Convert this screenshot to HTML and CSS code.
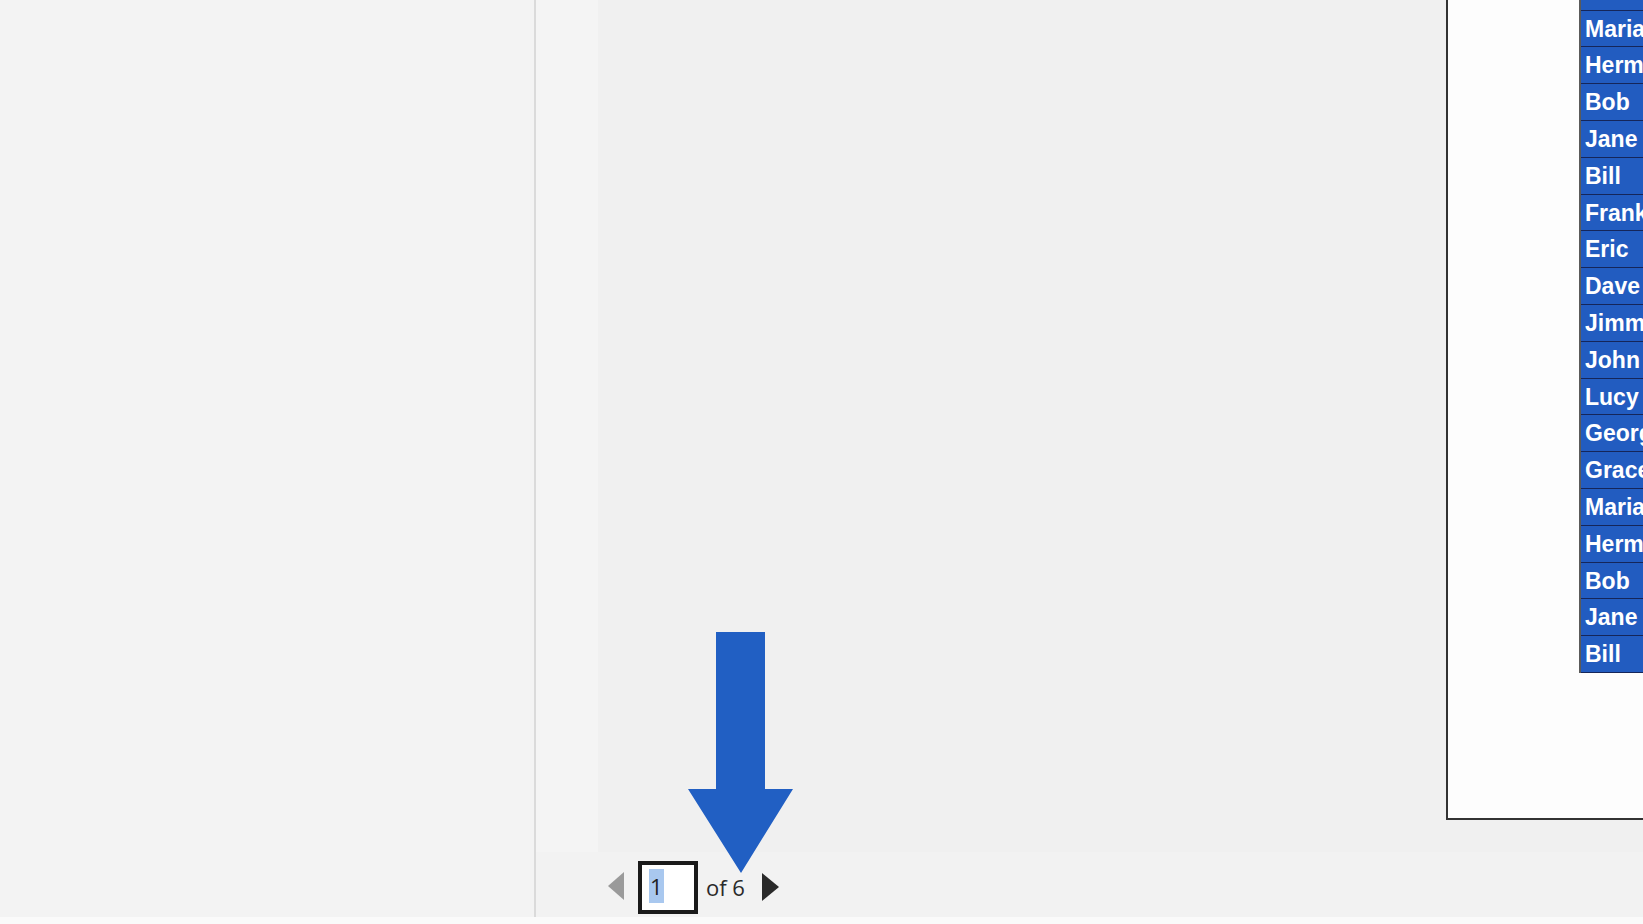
FILE: index.html
```html
<!DOCTYPE html>
<html lang="en">
<head>
<meta charset="utf-8">
<title>Report viewer</title>
<link rel="stylesheet" href="styles.css">
</head>
<body>
<div class="app">
  <aside class="sidebar"></aside>
  <div class="divider"></div>
  <section class="viewer">
    <div class="stage">
      <div class="gutter"></div>
      <div class="canvas">
        <div class="page">
          <div class="names">
            <div class="row">Grace</div>
            <div class="row">Maria</div>
            <div class="row">Herman</div>
            <div class="row">Bob</div>
            <div class="row">Jane</div>
            <div class="row">Bill</div>
            <div class="row">Frank</div>
            <div class="row">Eric</div>
            <div class="row">Dave</div>
            <div class="row">Jimmy</div>
            <div class="row">John</div>
            <div class="row">Lucy</div>
            <div class="row">George</div>
            <div class="row">Grace</div>
            <div class="row">Maria</div>
            <div class="row">Herman</div>
            <div class="row">Bob</div>
            <div class="row">Jane</div>
            <div class="row">Bill</div>
          </div>
        </div>
      </div>
    </div>
    <div class="pager">
      <span class="tri tri-prev"></span>
      <div class="page-box"><span class="sel">1</span></div>
      <span class="of">of 6</span>
      <span class="tri tri-next"></span>
    </div>
    <svg class="arrow" width="105" height="241" viewBox="0 0 105 241" aria-hidden="true">
      <polygon points="28,0 77,0 77,157 105,157 53,241 0,157 28,157" fill="#215fc3"/>
    </svg>
  </section>
</div>
<div class="footer-line"></div>
</body>
</html>
```

FILE: styles.css
```css
html, body {
  margin: 0;
  padding: 0;
}
body {
  width: 1643px;
  height: 924px;
  overflow: hidden;
  background: #f8f8f8;
  font-family: "Open Sans", "Noto Sans", sans-serif;
}
.app {
  display: flex;
  height: 917px;
}
.sidebar {
  width: 534px;
  background: #f3f3f3;
}
.divider {
  width: 2px;
  background: #dadada;
}
.viewer {
  position: relative;
  flex: 1;
  display: flex;
  flex-direction: column;
  min-width: 0;
}
.stage {
  display: flex;
  height: 852px;
}
.gutter {
  width: 62px;
  background: #f4f4f4;
}
.canvas {
  flex: 1;
  min-width: 0;
  background: #f0f0f0;
  overflow: hidden;
  display: flex;
  align-items: flex-end;
  padding: 0 0 32px 848px;
}
.page {
  flex: none;
  width: 400px;
  height: 900px;
  background: #fdfdfd;
  border-left: 2px solid #333;
  border-bottom: 2px solid #333;
  display: flex;
  flex-direction: column;
  justify-content: flex-end;
  padding-bottom: 145px;
  box-sizing: border-box;
}
.names {
  margin-left: 131px;
  border-left: 2px solid #5a5a5a;
  width: 260px;
  flex: none;
}
.row {
  height: 36.8px;
  box-sizing: border-box;
  padding: 0 0 0 4px;
  background: #225cc0;
  color: #fff;
  font-family: "Liberation Sans", Arial, sans-serif;
  font-weight: bold;
  font-size: 23px;
  line-height: 36px;
  border-bottom: 1px solid #15265a;
  white-space: nowrap;
}
.pager {
  flex: 1;
  background: #f2f2f2;
  display: flex;
  align-items: flex-start;
  padding: 9px 0 0 72px;
}
.tri {
  width: 0;
  height: 0;
  border-top: 14px solid transparent;
  border-bottom: 14px solid transparent;
  margin-top: 11px;
}
.tri-prev {
  border-right: 16px solid #9a9a9a;
  margin-right: 14px;
}
.tri-next {
  border-left: 17px solid #2a2a2a;
  margin-left: 17px;
  margin-top: 12px;
}
.page-box {
  width: 60px;
  height: 53px;
  box-sizing: border-box;
  border: 4px solid #1a1a1a;
  background: #fff;
  padding: 4px 0 0 7px;
}
.sel {
  display: inline-block;
  background: #a9c8ef;
  color: #222;
  font-size: 22px;
  line-height: 34px;
  height: 34px;
  padding: 0 1px;
}
.of {
  margin-left: 8px;
  font-size: 22px;
  color: #2a2a2a;
  line-height: 53px;
}
.arrow {
  position: absolute;
  left: 152px;
  top: 632px;
}
.footer-line {
  height: 7px;
  background: #fafafa;
}
```
